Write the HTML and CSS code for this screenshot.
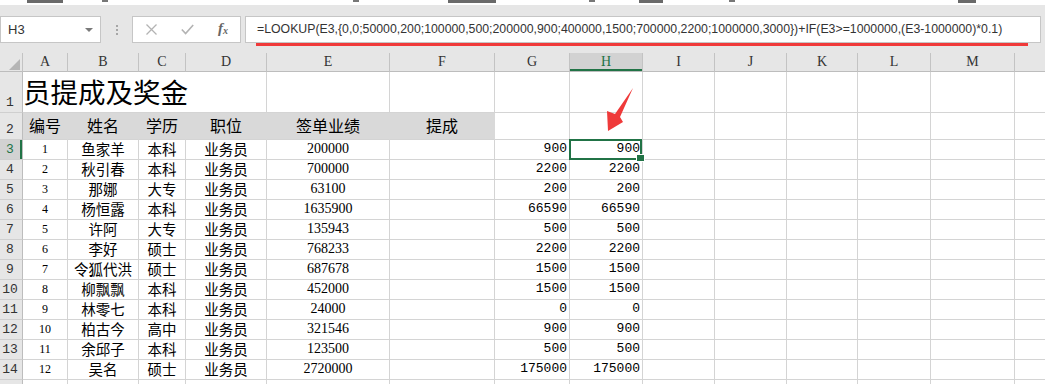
FILE: index.html
```html
<!DOCTYPE html>
<html lang="zh-CN">
<head>
  <meta charset="UTF-8" />
  <title>业务员提成及奖金</title>
  <link rel="stylesheet" href="styles.css">
</head>
<body>
  <div class="ribbon-edge">
    <span class="rb rb-clip"></span>
    <span class="rb-dot rb-d1"></span>
    <span class="rb-dot rb-d2"></span>
    <span class="rb rb-align"></span>
    <span class="rb-dot rb-d3"></span>
    <span class="rb rb-num"></span>
    <span class="rb-dot rb-d4"></span>
    <span class="rb rb-style"></span>
  </div>

  <div class="formula-bar">
    <div class="name-box"><span>H3</span><span class="caret"></span></div>
    <div class="grip"><i></i><i></i><i></i></div>
    <div class="fx-box">
      <svg class="ico-x" width="11" height="11" viewBox="0 0 11 11"><path d="M0.5 0.5 L10.5 10.5 M10.5 0.5 L0.5 10.5" stroke="#b3b3b3" stroke-width="1.3" fill="none"/></svg>
      <svg class="ico-ok" width="13" height="11" viewBox="0 0 13 11"><path d="M0.8 5.5 L4.6 9.6 L12.2 1" stroke="#b3b3b3" stroke-width="1.6" fill="none"/></svg>
      <span class="fx">f<sub>x</sub></span>
    </div>
    <div class="formula">=LOOKUP(E3,{0,0;50000,200;100000,500;200000,900;400000,1500;700000,2200;1000000,3000})+IF(E3&gt;=1000000,(E3-1000000)*0.1)<span class="underline"></span></div>
  </div>

  <table class="sheet">
    <colgroup>
      <col class="w-rh"><col class="w-a"><col class="w-b"><col class="w-c"><col class="w-d"><col class="w-e"><col class="w-f">
      <col class="w-g"><col class="w-h"><col class="w-i"><col class="w-j"><col class="w-k"><col class="w-l"><col class="w-m"><col class="w-n">
    </colgroup>
    <tr class="hdr">
      <th class="corner"><svg width="11" height="11" viewBox="0 0 11 11"><polygon points="11,0 11,11 0,11" fill="#b5b5b5"/></svg></th>
      <th>A</th><th>B</th><th>C</th><th>D</th><th>E</th><th>F</th><th>G</th><th class="on">H</th><th>I</th><th>J</th><th>K</th><th>L</th><th>M</th><th></th>
    </tr>
    <tr class="r1">
      <th class="rh">1</th>
      <td colspan="4" class="title">员提成及奖金</td>
      <td></td><td></td><td></td><td></td><td></td><td></td><td></td><td></td><td></td><td></td>
    </tr>
    <tr class="r2">
      <th class="rh">2</th>
      <td class="hd">编号</td><td class="hd">姓名</td><td class="hd">学历</td><td class="hd">职位</td><td class="hd">签单业绩</td><td class="hd">提成</td>
      <td></td><td></td><td></td><td></td><td></td><td></td><td></td><td></td>
    </tr>
    <tr>
      <th class="rh on">3</th>
      <td class="no">1</td><td class="cn">鱼家羊</td><td class="cn">本科</td><td class="cn">业务员</td><td class="amt">200000</td><td></td>
      <td class="num">900</td><td class="num sel">900</td><td></td><td></td><td></td><td></td><td></td><td></td>
    </tr>
    <tr>
      <th class="rh">4</th>
      <td class="no">2</td><td class="cn">秋引春</td><td class="cn">本科</td><td class="cn">业务员</td><td class="amt">700000</td><td></td>
      <td class="num">2200</td><td class="num">2200</td><td></td><td></td><td></td><td></td><td></td><td></td>
    </tr>
    <tr>
      <th class="rh">5</th>
      <td class="no">3</td><td class="cn">那娜</td><td class="cn">大专</td><td class="cn">业务员</td><td class="amt">63100</td><td></td>
      <td class="num">200</td><td class="num">200</td><td></td><td></td><td></td><td></td><td></td><td></td>
    </tr>
    <tr>
      <th class="rh">6</th>
      <td class="no">4</td><td class="cn">杨恒露</td><td class="cn">本科</td><td class="cn">业务员</td><td class="amt">1635900</td><td></td>
      <td class="num">66590</td><td class="num">66590</td><td></td><td></td><td></td><td></td><td></td><td></td>
    </tr>
    <tr>
      <th class="rh">7</th>
      <td class="no">5</td><td class="cn">许阿</td><td class="cn">大专</td><td class="cn">业务员</td><td class="amt">135943</td><td></td>
      <td class="num">500</td><td class="num">500</td><td></td><td></td><td></td><td></td><td></td><td></td>
    </tr>
    <tr>
      <th class="rh">8</th>
      <td class="no">6</td><td class="cn">李好</td><td class="cn">硕士</td><td class="cn">业务员</td><td class="amt">768233</td><td></td>
      <td class="num">2200</td><td class="num">2200</td><td></td><td></td><td></td><td></td><td></td><td></td>
    </tr>
    <tr>
      <th class="rh">9</th>
      <td class="no">7</td><td class="cn">令狐代洪</td><td class="cn">硕士</td><td class="cn">业务员</td><td class="amt">687678</td><td></td>
      <td class="num">1500</td><td class="num">1500</td><td></td><td></td><td></td><td></td><td></td><td></td>
    </tr>
    <tr>
      <th class="rh">10</th>
      <td class="no">8</td><td class="cn">柳飘飘</td><td class="cn">本科</td><td class="cn">业务员</td><td class="amt">452000</td><td></td>
      <td class="num">1500</td><td class="num">1500</td><td></td><td></td><td></td><td></td><td></td><td></td>
    </tr>
    <tr>
      <th class="rh">11</th>
      <td class="no">9</td><td class="cn">林零七</td><td class="cn">本科</td><td class="cn">业务员</td><td class="amt">24000</td><td></td>
      <td class="num">0</td><td class="num">0</td><td></td><td></td><td></td><td></td><td></td><td></td>
    </tr>
    <tr>
      <th class="rh">12</th>
      <td class="no">10</td><td class="cn">柏古今</td><td class="cn">高中</td><td class="cn">业务员</td><td class="amt">321546</td><td></td>
      <td class="num">900</td><td class="num">900</td><td></td><td></td><td></td><td></td><td></td><td></td>
    </tr>
    <tr>
      <th class="rh">13</th>
      <td class="no">11</td><td class="cn">余邱子</td><td class="cn">本科</td><td class="cn">业务员</td><td class="amt">123500</td><td></td>
      <td class="num">500</td><td class="num">500</td><td></td><td></td><td></td><td></td><td></td><td></td>
    </tr>
    <tr>
      <th class="rh">14</th>
      <td class="no">12</td><td class="cn">吴名</td><td class="cn">硕士</td><td class="cn">业务员</td><td class="amt">2720000</td><td></td>
      <td class="num">175000</td><td class="num">175000</td><td></td><td></td><td></td><td></td><td></td><td></td>
    </tr>
    <tr>
      <th class="rh"></th>
      <td></td><td></td><td></td><td></td><td></td><td></td><td></td><td></td><td></td><td></td><td></td><td></td><td></td><td></td>
    </tr>
  </table>

  <svg class="arrow" width="40" height="50" viewBox="0 0 40 50">
    <polygon points="33,3 20,32 23,37 8,46 7,26 15,29" fill="#ef3a3a"/>
  </svg>
</body>
</html>
```

FILE: styles.css
```css
* { margin: 0; padding: 0; box-sizing: border-box; }
body {
  width: 1045px;
  height: 384px;
  overflow: hidden;
  position: relative;
  background: #fff;
  font-family: "Noto Sans CJK SC", sans-serif;
  color: #000;
}

/* bottom edge of the ribbon, mostly cut off */
.ribbon-edge {
  height: 5px;
  display: flex;
  align-items: flex-start;
  background: #fff;
}
.rb { height: 3px; background: #6a6a6a; flex-shrink: 0; }
.rb-dot { width: 6px; height: 2px; background: #777; flex-shrink: 0; }
.rb-clip { margin-left: 27px; width: 36px; }
.rb-d1 { margin-left: 39px; }
.rb-d2 { margin-left: 245px; }
.rb-align { margin-left: 89px; width: 48px; }
.rb-d3 { margin-left: 93px; }
.rb-num { margin-left: 44px; width: 24px; }
.rb-d4 { margin-left: 66px; }
.rb-style { margin-left: 223px; width: 18px; }

/* formula bar */
.formula-bar {
  height: 48px;
  background: #e6e6e6;
  display: flex;
  align-items: flex-start;
  padding-top: 11px;
}
.name-box {
  width: 101px;
  height: 27px;
  background: #fff;
  border: 1px solid #c6c6c6;
  display: flex;
  align-items: center;
  justify-content: space-between;
  padding: 0 7px 0 7px;
  font: 13px "Liberation Sans", sans-serif;
  color: #333;
}
.caret {
  border-left: 4px solid transparent;
  border-right: 4px solid transparent;
  border-top: 4px solid #7a7a7a;
}
.grip {
  width: 31px;
  display: flex;
  flex-direction: column;
  align-items: center;
  gap: 2px;
  padding-top: 9px;
}
.grip i { width: 2px; height: 2px; background: #a6a6a6; }
.fx-box {
  width: 109px;
  height: 27px;
  background: #fff;
  border: 1px solid #c6c6c6;
  display: flex;
  align-items: center;
  padding-left: 13px;
}
.ico-ok { margin-left: 24px; }
.fx {
  margin-left: 24px;
  font: italic bold 15px "Liberation Serif", serif;
  color: #666;
  line-height: 15px;
}
.fx sub { font-size: 10px; vertical-align: -1px; }
.formula {
  position: relative;
  width: 796px;
  height: 27px;
  margin-left: 4px;
  background: #fff;
  border: 1px solid #c6c6c6;
  padding-left: 11px;
  font: 12.3px "Liberation Sans", sans-serif;
  line-height: 25px;
  color: #333;
  white-space: nowrap;
}
.underline {
  position: absolute;
  left: 10px;
  right: 12px;
  bottom: -4px;
  height: 3px;
  background: #f03a3a;
}

/* sheet grid */
.sheet {
  border-collapse: separate;
  border-spacing: 0;
  table-layout: fixed;
  width: 1075px;
}
.w-rh { width: 23px; }
.w-a { width: 45px; }
.w-b { width: 71px; }
.w-c { width: 47px; }
.w-d { width: 81px; }
.w-e { width: 123px; }
.w-f { width: 105px; }
.w-g { width: 75px; }
.w-h { width: 73px; }
.w-i { width: 72px; }
.w-j { width: 72px; }
.w-k { width: 71px; }
.w-l { width: 73px; }
.w-m { width: 84px; }
.w-n { width: 60px; }

.sheet tr { height: 20px; }
.sheet .hdr { height: 19px; }
.sheet .r1 { height: 41px; }
.sheet .r2 { height: 27px; }

.sheet td, .sheet th {
  border-right: 1px solid #d4d4d4;
  border-bottom: 1px solid #d4d4d4;
  padding: 0 3px 2px;
  vertical-align: bottom;
  white-space: nowrap;
  font-weight: normal;
  line-height: 17px;
}

.hdr th {
  background: #e6e6e6;
  border-right-color: #c3c3c3;
  border-bottom-color: #bdbdbd;
  font: 14px "Liberation Serif", serif;
  color: #333;
  text-align: center;
  vertical-align: middle;
  padding: 0;
  line-height: 18px;
}
.hdr th.corner { padding: 0 2px 1px 0; vertical-align: bottom; }
.corner svg { display: block; margin-left: auto; }
.hdr th.on {
  background: #d2d2d2;
  color: #217346;
  box-shadow: inset 0 -2px 0 #217346;
}

.sheet th.rh {
  background: #e6e6e6;
  border-right-color: #bdbdbd;
  border-bottom-color: #cfcfcf;
  font: 13px "Liberation Mono", monospace;
  line-height: 17px;
  color: #333;
  text-align: center;
  padding: 0 2px 1px 0;
}
.sheet th.rh.on {
  background: #d2d2d2;
  color: #217346;
  box-shadow: inset -2px 0 0 #217346;
}

.sheet td.title {
  font-size: 27.5px;
  line-height: 32px;
  padding: 0 0 5px 0;
}
.sheet td.hd {
  background: #d9d9d9;
  border-right-color: #d9d9d9;
  text-align: center;
  font-size: 16px;
  line-height: 20px;
  padding-bottom: 4px;
}
.no {
  text-align: center;
  font: bold 12px "Liberation Serif", serif;
}
.sheet td.no { line-height: 15px; padding-bottom: 2px; }
.cn {
  text-align: center;
  font-size: 14.5px;
}
.amt {
  text-align: center;
  font: 14px "Liberation Serif", serif;
}
.sheet td.amt { line-height: 17px; }
.num {
  text-align: right;
  font: 13px "Liberation Mono", monospace;
}
.sheet td.num { padding-right: 2px; line-height: 17px; }

/* active cell */
.sel { position: relative; }
.sel::before {
  content: "";
  position: absolute;
  left: -1px;
  top: -1px;
  right: 0;
  bottom: -1px;
  border: 2px solid #217346;
}
.sel::after {
  content: "";
  position: absolute;
  right: -3px;
  bottom: -3px;
  width: 7px;
  height: 6px;
  background: #217346;
  border: 1px solid #fff;
}

.arrow {
  position: absolute;
  left: 600px;
  top: 85px;
}
```
